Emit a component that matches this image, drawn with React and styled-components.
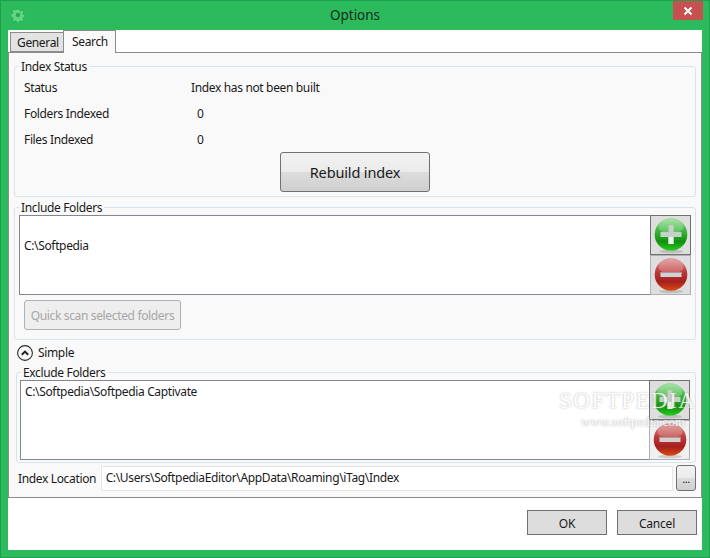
import React from "react"
import styled, { createGlobalStyle } from "styled-components"

const GlobalStyle = createGlobalStyle`
html, body {
  margin: 0;
  padding: 0;
  background: #2bbb5c;
}
* {
  box-sizing: border-box;
}
`

const FONT = `"Noto Sans", "Open Sans", sans-serif`

const GearIcon = () => (
  <svg width="14" height="14" viewBox="0 0 16 16">
    <path
      d="M6.600 1h2.800l.4 2 1.200.5 1.700-1.100 2 2-1.100 1.700.5 1.200 2 .4v2.800l-2 .4-.5 1.200 1.100 1.700-2 2-1.700-1.100-1.200.5-.4 2H6.600l-.4-2-1.200-.5-1.700 1.100-2-2 1.100-1.700-.5-1.200-2-.4V6.600l2-.4.5-1.200-1.100-1.700 2-2 1.700 1.100 1.200-.5z"
      fill="#62d585"
      stroke="#23a650"
      strokeWidth="0.8"
    />
    <circle cx="8" cy="8" r="2.500" fill="#2aa850" />
  </svg>
)

const CloseIcon = () => (
  <svg width="10" height="10" viewBox="0 0 10 10">
    <path d="M1.500 1.500l7 7M8.500 1.500l-7 7" stroke="#fff" strokeWidth="2" />
  </svg>
)

const ChevronUp = () => (
  <svg width="16" height="16" viewBox="0 0 16 16">
    <circle cx="8" cy="8" r="7.400" fill="#fbfbfb" stroke="#2b2b2b" strokeWidth="1.100" />
    <path d="M4.800 9.800L8 6.600l3.200 3.200" fill="none" stroke="#222" strokeWidth="2" />
  </svg>
)

const RoundIcon = ({ kind }) => {
  const green = kind === "add"
  const id = green ? "addBall" : "removeBall"
  return (
    <svg width="36" height="37" viewBox="0 0 36 37">
      <defs>
        <linearGradient id={id} x1="0" y1="0" x2="0" y2="1">
          {green ? (
            <>
              <stop offset="0" stopColor="#8fdc8f" />
              <stop offset="0.42" stopColor="#35b235" />
              <stop offset="0.72" stopColor="#0d920d" />
              <stop offset="1" stopColor="#2ccc22" />
            </>
          ) : (
            <>
              <stop offset="0" stopColor="#dc8f8f" />
              <stop offset="0.42" stopColor="#bd3a3b" />
              <stop offset="0.72" stopColor="#a51f1f" />
              <stop offset="1" stopColor="#dc4a0e" />
            </>
          )}
        </linearGradient>
      </defs>
      <ellipse cx="18" cy="34.500" rx="12" ry="1.800" fill="#000" opacity="0.14" />
      <circle cx="18" cy="17.500" r="16.300" fill={`url(#${id})`} />
      <ellipse cx="18" cy="9.500" rx="12.500" ry="7.500" fill="#fff" opacity="0.22" />
      {green ? (
        <>
          <path d="M15.500 8h5v7h8v5h-8v7h-5v-7h-8v-5h8z" fill="#c8cec8" />
          <path d="M15.500 20h5v7h-5z" fill="#eef2ee" />
        </>
      ) : (
        <>
          <rect x="7.500" y="15" width="21" height="5" fill="#d6cfcf" />
          <rect x="7.500" y="15" width="21" height="1" fill="#a99a9a" />
        </>
      )}
    </svg>
  )
}

export default function App() {
  return (
    <>
      <GlobalStyle />
      <Window>
        <TitleBar>
          <TitleIcon>
            <GearIcon />
          </TitleIcon>
          <TitleText>Options</TitleText>
          <CloseButton>
            <CloseIcon />
          </CloseButton>
        </TitleBar>
        <Client>
          <TabStrip>
            <Tab>General</Tab>
            <Tab active>Search</Tab>
          </TabStrip>
          <TabPanel>
            <StatusGroup>
              <GroupLegend offset={-5}>Index Status</GroupLegend>
              <InfoRow>
                <span>Status</span>
                <span>Index has not been built</span>
              </InfoRow>
              <InfoRow>
                <span>Folders Indexed</span>
                <CountValue>0</CountValue>
              </InfoRow>
              <InfoRow>
                <span>Files Indexed</span>
                <CountValue>0</CountValue>
              </InfoRow>
              <RebuildButton>Rebuild index</RebuildButton>
            </StatusGroup>

            <IncludeGroup>
              <GroupLegend offset={0}>Include Folders</GroupLegend>
              <FolderRow>
                <FolderList top={21}>C:\Softpedia</FolderList>
                <SideButtons>
                  <IconButton hot>
                    <RoundIcon kind="add" />
                  </IconButton>
                  <IconButton>
                    <RoundIcon kind="remove" />
                  </IconButton>
                </SideButtons>
              </FolderRow>
              <QuickScan disabled>Quick scan selected folders</QuickScan>
            </IncludeGroup>

            <Expander>
              <ChevronUp />
              <span>Simple</span>
            </Expander>

            <ExcludeGroup>
              <GroupLegend offset={1}>Exclude Folders</GroupLegend>
              <FolderRow>
                <FolderList top={2}>C:\Softpedia\Softpedia Captivate</FolderList>
                <SideButtons>
                  <IconButton hot>
                    <RoundIcon kind="add" />
                  </IconButton>
                  <IconButton light>
                    <RoundIcon kind="remove" />
                  </IconButton>
                </SideButtons>
              </FolderRow>
            </ExcludeGroup>

            <LocationRow>
              <LocationLabel>Index Location</LocationLabel>
              <LocationInput>C:\Users\SoftpediaEditor\AppData\Roaming\iTag\Index</LocationInput>
              <BrowseButton>...</BrowseButton>
            </LocationRow>
          </TabPanel>
          <Footer>
            <FooterButton>OK</FooterButton>
            <FooterButton>Cancel</FooterButton>
          </Footer>
        </Client>
        <Watermark>
          <WatermarkName>SOFTPEDIA</WatermarkName>
          <WatermarkUrl>www.softpedia.com</WatermarkUrl>
        </Watermark>
      </Window>
    </>
  )
}

const Window = styled.div`
position: relative;
width: 710px;
height: 558px;
display: flex;
flex-direction: column;
background-color: #2bbb5c;
border: 1px solid #1f9e4d;
font-family: ${FONT};
font-size: 12px;
letter-spacing: -0.35px;
color: #1a1a1a;
overflow: hidden;
`

const TitleBar = styled.div`
height: 29px;
display: grid;
grid-template-columns: 1fr auto 1fr;
align-items: start;
`

const TitleIcon = styled.div`
padding: 7px 0 0 10px;
display: flex;
`

const TitleText = styled.div`
font-size: 13.5px;
letter-spacing: 0;
line-height: 28px;
color: #1c2b20;
`

const CloseButton = styled.div`
justify-self: end;
width: 30px;
height: 19px;
margin-right: 6px;
background-color: #c75050;
display: flex;
align-items: center;
justify-content: center;
`

const Client = styled.div`
margin: 0 7px 0 7px;
height: 520px;
background-color: #fff;
display: flex;
flex-direction: column;
`

const TabStrip = styled.div`
height: 22px;
padding-left: 2px;
display: flex;
align-items: flex-end;
position: relative;
z-index: 1;
`

const Tab = styled.div`
height: ${props => props.active ? "23px" : "20px"};
width: ${props => props.active ? "53px" : "54px"};
margin-bottom: ${props => props.active ? "-1px" : "0"};
margin-left: ${props => props.active ? "-1px" : "0"};
padding: ${props => props.active ? "0 0 0 8px" : "0 0 0 6px"};
line-height: ${props => props.active ? "22px" : "20px"};
background-color: ${props => props.active ? "#f9f9f9" : "#e3e3e3"};
border: 1px solid #8c8c90;
border-bottom: ${props => props.active ? "none" : "1px solid #8c8c90"};
`

const TabPanel = styled.div`
height: 446px;
padding: 0 5px 0 5px;
background-color: #f9f9f9;
border: 1px solid #8c8c90;
display: flex;
flex-direction: column;
`

const Group = styled.fieldset`
margin: 0;
min-width: 0;
border: 1px solid #dbe3ea;
border-radius: 3px;
`

const GroupLegend = styled.legend`
padding: 3px 2px 1px 2px;
line-height: 16px;
margin-left: ${props => props.offset}px;
margin-bottom: -2px;
`

const StatusGroup = styled(Group)`
margin-top: 3px;
height: 141px;
padding: 1px 9px 0 9px;
`

const InfoRow = styled.div`
height: 26px;
line-height: 26px;
display: grid;
grid-template-columns: 167px 1fr;
`

const CountValue = styled.span`
padding-left: 6px;
`

const RebuildButton = styled.button`
display: block;
width: 150px;
height: 40px;
margin: -1px 0 0 256px;
font-family: ${FONT};
font-size: 14.5px;
letter-spacing: -0.15px;
color: #1a1a1a;
border: 1px solid #707070;
border-radius: 3px;
background: linear-gradient(#f2f2f2 0%, #ebebeb 50%, #dddddd 50%, #cfcfcf 100%);
`

const IncludeGroup = styled(Group)`
margin-top: 0;
height: 143px;
padding: 0 4px 0 4px;
`

const FolderRow = styled.div`
display: flex;
height: 80px;
`

const FolderList = styled.div`
flex: 1;
padding: ${props => props.top}px 0 0 4px;
background-color: #fff;
border: 1px solid #828790;
line-height: 17px;
`

const SideButtons = styled.div`
width: 40px;
display: flex;
flex-direction: column;
`

const IconButton = styled.div`
height: 40px;
margin-left: -1px;
display: flex;
align-items: center;
justify-content: center;
background-color: ${props => props.light ? "#f0f0f0" : "#dedede"};
border: 1px solid ${props => props.hot ? "#707070" : "#adb2b5"};
`

const QuickScan = styled.button`
display: block;
width: 157px;
height: 30px;
margin: 5px 0 0 5px;
padding: 0;
font-family: ${FONT};
font-size: 12px;
letter-spacing: -0.35px;
color: #a6a6a6;
background-color: #eeeeee;
border: 1px solid #adb2b5;
border-radius: 3px;
`

const Expander = styled.div`
height: 25px;
padding-left: 3px;
display: flex;
align-items: center;
gap: 5px;
`

const ExcludeGroup = styled(Group)`
margin: -3px 0 0 2px;
height: 101px;
padding: 0 5px 0 3px;
`

const LocationRow = styled.div`
margin-top: 2px;
height: 26px;
display: flex;
align-items: center;
padding-left: 4px;
`

const LocationLabel = styled.div`
width: 83px;
white-space: nowrap;
`

const LocationInput = styled.div`
width: 575px;
height: 25px;
padding-left: 4px;
line-height: 22px;
background-color: #fff;
border: 1px solid #e3e6ea;
`

const BrowseButton = styled.div`
width: 20px;
height: 26px;
margin-left: 3px;
text-align: center;
line-height: 26px;
font-size: 11px;
border: 1px solid #707070;
border-radius: 3px;
background: linear-gradient(#f2f2f2 0%, #ebebeb 50%, #dddddd 50%, #cfcfcf 100%);
`

const Footer = styled.div`
flex: 1;
padding: 12px 5px 0 0;
display: flex;
justify-content: flex-end;
align-items: flex-start;
gap: 10px;
`

const FooterButton = styled.button`
width: 80px;
height: 25px;
padding: 1px 0 0 0;
font-family: ${FONT};
font-size: 12px;
letter-spacing: -0.2px;
color: #1a1a1a;
background-color: #dddddd;
border: 1px solid #707070;
`

const Watermark = styled.div`
position: absolute;
left: 558px;
top: 386px;
color: #fff;
font-family: "Liberation Serif", serif;
letter-spacing: 0;
pointer-events: none;
`

const WatermarkName = styled.div`
font-size: 23px;
line-height: 27px;
letter-spacing: 1.5px;
opacity: 0.8;
text-shadow: 0 0 2px #9a9a9a;
`

const WatermarkUrl = styled.div`
margin: 1px 0 0 22px;
font-size: 13px;
line-height: 14px;
opacity: 0.85;
text-shadow: 0 0 2px #8a8a8a;
`
